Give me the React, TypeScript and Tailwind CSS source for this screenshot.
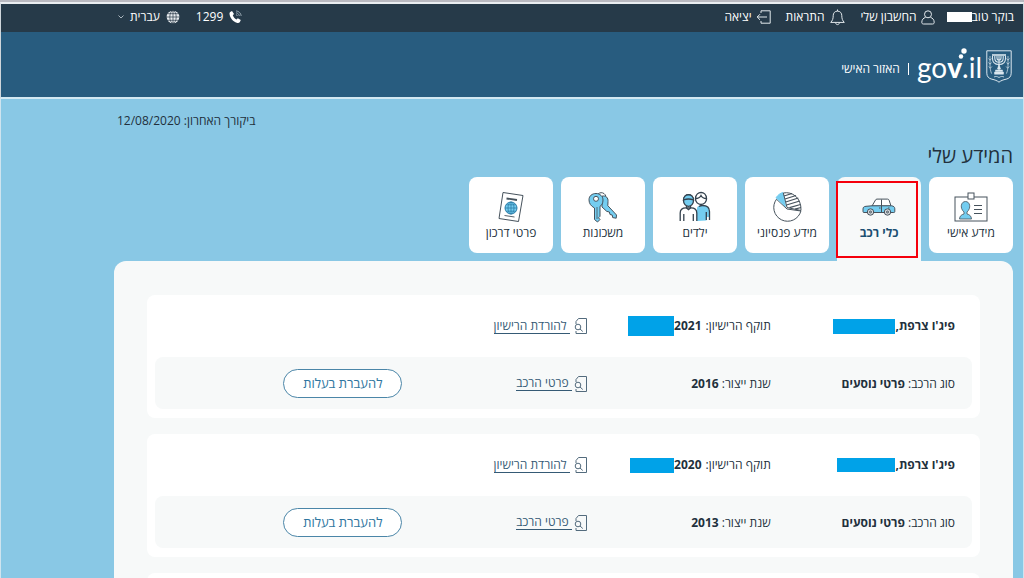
import { useState, type ReactNode } from 'react'
import clsx from 'clsx'

type Vehicle = {
  id: string
  make: string
  nameMask: string
  licenseYear: string
  yearMask: string
  type: string
  built: string
}

const VEHICLES: Vehicle[] = [
  {
    id: 'a',
    make: "פיג'ו צרפת,",
    nameMask: 'h-[15px] w-[62px]',
    licenseYear: '2021',
    yearMask: 'h-5 w-[46px]',
    type: 'פרטי נוסעים',
    built: '2016',
  },
  {
    id: 'b',
    make: "פיג'ו צרפת,",
    nameMask: 'h-[14px] w-[58px]',
    licenseYear: '2020',
    yearMask: 'h-[15px] w-11',
    type: 'פרטי נוסעים',
    built: '2013',
  },
]

const LINE = '#46525c'
const SKY = '#74cdf0'

function PhoneIcon() {
  return (
    <svg width="13" height="14" viewBox="0 0 13 14" fill="none">
      <path d="M1.200 1.900 3 .9 5 3.900 3.800 5.200c.6 1.900 1.900 3.400 3.700 4.200l1.300-1.100 3 1.800-.9 2c-.7.9-2 1-3.200.6C4.300 11.600 1.300 8.200.6 4.400.4 3.400.5 2.500 1.200 1.900Z" fill="#fff" />
      <path d="M7 .9c2.800.2 5 2.300 5.200 5.100M7 2.800c1.800.2 3.100 1.500 3.300 3.200M7 4.700c.8.1 1.300.6 1.400 1.300" stroke="#93a3ae" strokeWidth="1" />
    </svg>
  )
}

function GlobeIcon() {
  return (
    <svg width="14" height="14" viewBox="0 0 14 14" fill="none">
      <circle cx="7" cy="7" r="6.300" fill="#e8edf0" />
      <path d="M7 .5v13M.5 7h13M1.800 3.700h10.400M1.800 10.300h10.400" stroke="#263746" strokeWidth=".7" />
      <ellipse cx="7" cy="7" rx="3.200" ry="6.300" stroke="#263746" strokeWidth=".7" />
    </svg>
  )
}

function UserIcon() {
  return (
    <svg width="14" height="15" viewBox="0 0 14 15" fill="none" stroke="#e3e9ed">
      <circle cx="7" cy="4.300" r="3.500" />
      <path d="M4.500 7.400C2.300 8 .9 9.700.8 12.200c0 1.200.5 1.800 1.600 1.800h9.200c1.100 0 1.600-.6 1.600-1.800-.1-2.500-1.500-4.200-3.700-4.800" />
    </svg>
  )
}

function BellIcon() {
  return (
    <svg width="15" height="17" viewBox="0 0 15 17" fill="none" stroke="#e3e9ed">
      <path d="M7.500.5v1.600M7.500 2.100c-2.700 0-4.300 2-4.300 4.600 0 3.100-.7 4.900-2.500 6.700h13.600c-1.800-1.800-2.500-3.600-2.500-6.700 0-2.600-1.600-4.600-4.300-4.600ZM5.700 13.600c0 1.300.7 2 1.800 2s1.800-.7 1.800-2" />
    </svg>
  )
}

function ExitIcon() {
  return (
    <svg width="15" height="14" viewBox="0 0 15 14" fill="none" stroke="#e3e9ed">
      <path d="M5 3V.8h9.200v12.400H5V11M11 7H1.200M4 4.200 1.200 7 4 9.800" />
    </svg>
  )
}

function Emblem() {
  return (
    <svg width="26" height="33" viewBox="0 0 26 33" fill="none" stroke="#dbe7ef">
      <path d="M.8.8h24.400v22.400c0 3.200-1.900 5.300-5.100 6-3 .6-5.300 1.500-7.100 3-1.800-1.500-4.100-2.400-7.100-3-3.200-.7-5.100-2.800-5.100-6Z" strokeWidth="1" />
      <path d="M4 6v9c0 3.500.6 6.400 1.600 8.600M2.500 8.500 4 10.200l1.600-1.700M2.500 12.500 4 14.200l1.600-1.700M2.800 16.500l1.500 1.700 1.600-1.700M22 6v9c0 3.500-.6 6.400-1.600 8.600M23.500 8.500 22 10.200l-1.600-1.700M23.500 12.500 22 14.200l-1.600-1.700M23.200 16.500l-1.500 1.700-1.600-1.700" strokeWidth=".7" />
      <path d="M6.500 6v2.500c0 3.800 2.600 6 6.500 6s6.500-2.200 6.500-6V6M8.800 6v2.300c0 2.500 1.600 4 4.200 4s4.200-1.500 4.200-4V6M11 6v2c0 1.300.8 2.200 2 2.200S15 9.300 15 8V6M13 6v15" strokeWidth="1.100" />
      <path d="M6 5h14" strokeWidth="1.600" />
      <path d="M13 14.500 11.400 19h3.200ZM9.500 20h7v1.600h-7ZM8.500 22h9v2.200h-9Z" fill="#dbe7ef" strokeWidth=".5" />
      <path d="M8 27c1.500-.8 3-.8 5 .5 2-1.300 3.500-1.300 5-.5" strokeWidth=".8" />
    </svg>
  )
}

function GovLogo() {
  return (
    <span dir="ltr" className="relative block font-['Lato','Noto_Sans',sans-serif] text-[28px] leading-8 text-white">
      go<b className="font-black">v</b>.il
      <svg className="absolute -top-[3px] left-[38px]" width="12" height="16" viewBox="0 0 12 16" fill="#fff">
        <circle cx="9" cy="3" r="2.700" />
        <circle cx="6" cy="8.500" r="2.200" />
      </svg>
    </span>
  )
}

function IdCardIcon() {
  return (
    <svg width="34" height="30" viewBox="0 0 34 30" fill="none" stroke={LINE}>
      <rect x="1" y="5" width="32" height="24" />
      <rect x="14" y="1" width="6" height="6" fill="#fff" />
      <path d="M5.500 27c.2-3 1.800-4.300 4.500-5v-2c-4.500-4-3-10.500 1.500-10.500S17.500 16 13 20v2c2.700.7 4.300 2 4.500 5Z" fill={SKY} strokeWidth=".8" />
      <path d="M20 13.500h8M20 17.500h8M20 21.500h8" />
    </svg>
  )
}

function CarIcon() {
  return (
    <svg width="34" height="18" viewBox="0 0 34 18" fill="none" stroke={LINE}>
      <path d="M10 8 13.500 2c.3-.6.8-.9 1.500-.9h10.500c.8 0 1.300.4 1.600 1.100L29 8Z" fill="#fff" />
      <path d="M1 13.500V11c0-1.800 1-2.500 3-2.700L10 7.800h19.500c2.200.3 3.300 1.200 3.300 3v2.700c0 .7-.3 1-1 1H2c-.7 0-1-.3-1-1Z" fill={SKY} />
      <path d="M19.500 1.500V14M17 10h1.500M26 10h1.500" />
      <circle cx="8.500" cy="14" r="3.200" fill="#d6dadd" />
      <circle cx="8.500" cy="14" r="1" />
      <circle cx="25.500" cy="14" r="3.200" fill="#d6dadd" />
      <circle cx="25.500" cy="14" r="1" />
    </svg>
  )
}

function PieIcon() {
  return (
    <svg width="32" height="32" viewBox="0 0 32 32" fill="none" stroke={LINE}>
      <path d="M16 18 5.500 8.200A13.800 13.800 0 1 0 29.900 20Z" fill="#fff" />
      <path d="M14.500 15.500 5 6.700C7.200 3.700 9.300 2.200 12 1.500Z" fill={SKY} stroke={SKY} />
      <path d="M12.300 2C21 .2 30.500 6.500 30 19.500L16 16.500Z" fill="#fff" />
      <path d="m13 5 8-2.500M14 8l11-3.500M14.700 11l12.600-4M15.500 14l13.200-4M18.500 16.700l11-3.200M24 18.200l6-1.700" strokeWidth="1.200" />
    </svg>
  )
}

function ChildrenIcon() {
  return (
    <svg width="32" height="32" viewBox="0 0 32 32" fill="none" stroke="#34424e" strokeWidth="1.300">
      <path d="M18 30V17.500c0-2 1.500-3 4-3 5.500 0 8.500 1.500 8.500 6V26h-3v3.500Z" fill={SKY} stroke="none" />
      <path d="M20 15.500c1.200-.7 2-1 3.500-1 4.800 0 7 1.500 7 6V29M27.300 21v8" />
      <circle cx="22" cy="8" r="5.500" fill="#fff" />
      <path d="M16.500 7.500c.5-8 10.700-8 11 0-3 0-4.500-1-5.500-3-1 2-2.500 3-5.500 3Z" fill="#fff" />
      <path d="M1.200 30v-8c0-3.600 2.300-5.200 5.800-5.200h5c3.500 0 5.800 1.600 5.800 5.200v8M4.800 30v-7M14.300 30v-7" />
      <ellipse cx="9.500" cy="9.500" rx="5" ry="5.800" fill={SKY} />
      <path d="M4.500 9c0-7 10-7 10 0-3.300-1.300-6.700-1.300-10 0Z" fill={SKY} />
      <path d="M7.500 15v2l2 1.600 2-1.600v-2" />
    </svg>
  )
}

function KeysIcon() {
  return (
    <svg width="30" height="32" viewBox="0 0 30 32" fill="none" stroke={LINE}>
      <path d="M8.500 6C9.500.5 16.500.2 18 5.500" />
      <path d="M14 5.200c3.500-1 6.500 1.500 6 5.500l-.2 4 8.700 9.300-.3 3.200-3.500-.6-.5-2.600-2.200-.5-.6-2.500-2.600-.6L14 16Z" fill={SKY} />
      <path d="M1 8.800c0-4 3.200-6.300 7-6.300s7 2.700 7 6.500c0 3.200-1.200 5.300-3 6.300v10l-1.500 1.500 1.500 1.700-2.500 2.500-3-2.500V17C3 15 1 12.700 1 8.800Z" fill={SKY} />
      <circle cx="8" cy="7.800" r="2.500" fill="#fff" />
      <path d="M9 16v12" strokeWidth=".8" />
    </svg>
  )
}

function PassportIcon() {
  return (
    <svg width="26" height="32" viewBox="0 0 26 32" fill="none" stroke={LINE}>
      <path d="M5 1.500 25 4.500 20.500 30.500 1 27.500Z" fill="#fff" />
      <path d="M8.500 7.500 19 9" strokeWidth="1.800" />
      <path d="m6.500 24.500 10 1.500" strokeWidth=".9" />
      <circle cx="13" cy="17" r="6" fill={SKY} stroke="#2c7da8" />
      <path d="M13 11v12M7 17h12M8.200 13.800h9.600M8.200 20.200h9.600" stroke="#2c7da8" strokeWidth=".8" />
      <ellipse cx="13" cy="17" rx="3" ry="6" stroke="#2c7da8" strokeWidth=".8" />
    </svg>
  )
}

function DocSearchIcon() {
  return (
    <svg className="shrink-0" width="13" height="16" viewBox="0 0 13 16" fill="none" stroke="#536b7d">
      <path d="M2 6V3.500L4.500.5h8v15H2V13" />
      <circle cx="4" cy="9" r="2.800" />
      <path d="m6 11 2.800 2.500" />
    </svg>
  )
}

const TABS: { key: string; label: string; icon: ReactNode }[] = [
  { key: 'personal', label: 'מידע אישי', icon: <IdCardIcon /> },
  { key: 'vehicles', label: 'כלי רכב', icon: <CarIcon /> },
  { key: 'pension', label: 'מידע פנסיוני', icon: <PieIcon /> },
  { key: 'children', label: 'ילדים', icon: <ChildrenIcon /> },
  { key: 'liens', label: 'משכונות', icon: <KeysIcon /> },
  { key: 'passport', label: 'פרטי דרכון', icon: <PassportIcon /> },
]

function DocLink({ children, tight }: { children: string; tight?: boolean }) {
  return (
    <a href="#" className={clsx('flex items-center text-[#355a75]', tight ? 'gap-0.5' : 'gap-1')}>
      <DocSearchIcon />
      <span className="border-b border-[#355a75] pr-[3px] leading-[14px]">{children}</span>
    </a>
  )
}

function VehicleCard({ v }: { v: Vehicle }) {
  return (
    <li className="rounded-lg bg-white px-2 pb-[9px]">
      <div className="grid h-[62px] grid-cols-[4fr_4fr_4fr_5fr] items-center px-[17px]">
        <h2 className="flex items-center font-bold">
          {v.make}
          <span className={clsx('bg-[#00a2e8]', v.nameMask)} />
        </h2>
        <p className="flex items-center gap-1">
          תוקף הרישיון:
          <b className="flex items-center">
            {v.licenseYear}
            <span className={clsx('bg-[#00a2e8]', v.yearMask)} />
          </b>
        </p>
        <DocLink>להורדת הרישיון</DocLink>
      </div>
      <div className="grid h-[52px] grid-cols-[4fr_4fr_4fr_5fr] items-center rounded-lg bg-[#f7f9f9] px-[17px] pt-px">
        <p>
          סוג הרכב: <b>{v.type}</b>
        </p>
        <p>
          שנת ייצור: <b>{v.built}</b>
        </p>
        <DocLink tight>פרטי הרכב</DocLink>
        <button type="button" className="h-[29px] w-[119px] rounded-full border border-[#4b86a8] bg-white text-[13px] text-[#2f76a0]">
          להעברת בעלות
        </button>
      </div>
    </li>
  )
}

export default function App() {
  const [tab, setTab] = useState('vehicles')

  return (
    <div dir="rtl" className="h-screen overflow-hidden border-t-2 border-[#b9b9c0] bg-[#89c8e5] font-['Open_Sans','Noto_Sans','DejaVu_Sans',sans-serif] text-xs text-[#22303c]">
      <div className="flex h-[30px] items-center justify-between border-x border-t-2 border-x-[#cfd6db] border-t-[#e9edf0] bg-[#263a49] pr-[9px] pb-0.5 pl-[117px] text-white">
        <div className="flex items-center gap-[15px]">
          <div className="flex items-center gap-3">
            <span className="flex items-center">
              בוקר טוב
              <span className="h-2.5 w-[25px] bg-white" />
            </span>
            <a href="#" className="flex items-center gap-1">
              <UserIcon />
              החשבון שלי
            </a>
          </div>
          <a href="#" className="flex items-center gap-1.5">
            <BellIcon />
            התראות
          </a>
          <a href="#" className="flex items-center gap-1">
            <ExitIcon />
            יציאה
          </a>
        </div>
        <div className="flex items-center gap-4">
          <a href="tel:1299" className="flex items-center gap-1.5 font-medium">
            <PhoneIcon />
            1299
          </a>
          <button type="button" className="flex items-center gap-1.5">
            <GlobeIcon />
            עברית
            <svg width="6" height="4" viewBox="0 0 6 4" fill="none" stroke="#aab6be">
              <path d="m.5.5 2.500 2.500L5.500.5" />
            </svg>
          </button>
        </div>
      </div>

      <header className="flex h-[67px] items-center gap-1 border-x border-b-2 border-x-[#cfd6db] border-b-[#d3e8f2] bg-[#285c7f] pt-1 pr-[11px] text-white">
        <Emblem />
        <GovLogo />
        <span className="mt-1 mr-1 h-3 w-px bg-white" />
        <span className="mt-1 mr-1">האזור האישי</span>
      </header>

      <main className="border-x border-[#cfe4ef] pr-[10px] pl-[113px]">
        <p className="pt-[13px] pl-[3px] text-left leading-[18px]">ביקורך האחרון: 12/08/2020</p>
        <h1 className="pt-3 text-xl leading-7">המידע שלי</h1>

        <div role="tablist" className="flex gap-2 pt-[7px]">
          {TABS.map(({ key, label, icon }) => {
            const active = tab === key
            return (
              <button
                key={key}
                type="button"
                role="tab"
                aria-selected={active}
                onClick={() => setTab(key)}
                className={clsx(
                  'relative flex w-[84px] flex-col items-center pt-3.5',
                  active
                    ? 'h-[84px] rounded-t-lg bg-[#f7f9f9] font-bold text-[#1c4f72]'
                    : 'h-[76px] rounded-lg bg-white',
                )}
              >
                <span className="flex h-8 items-center">{icon}</span>
                <span className="leading-5">{label}</span>
                {active && <span className="absolute top-1 right-[3px] -left-px h-[77px] border-2 border-[#f5000c]" />}
              </button>
            )
          })}
        </div>

        <section className="min-h-screen rounded-t-xl bg-[#f7f9f9] px-[33px] pt-[34px]">
          <ul className="space-y-4">
            {VEHICLES.map((v) => (
              <VehicleCard key={v.id} v={v} />
            ))}
            <li className="h-32 rounded-lg bg-white" />
          </ul>
        </section>
      </main>
    </div>
  )
}
